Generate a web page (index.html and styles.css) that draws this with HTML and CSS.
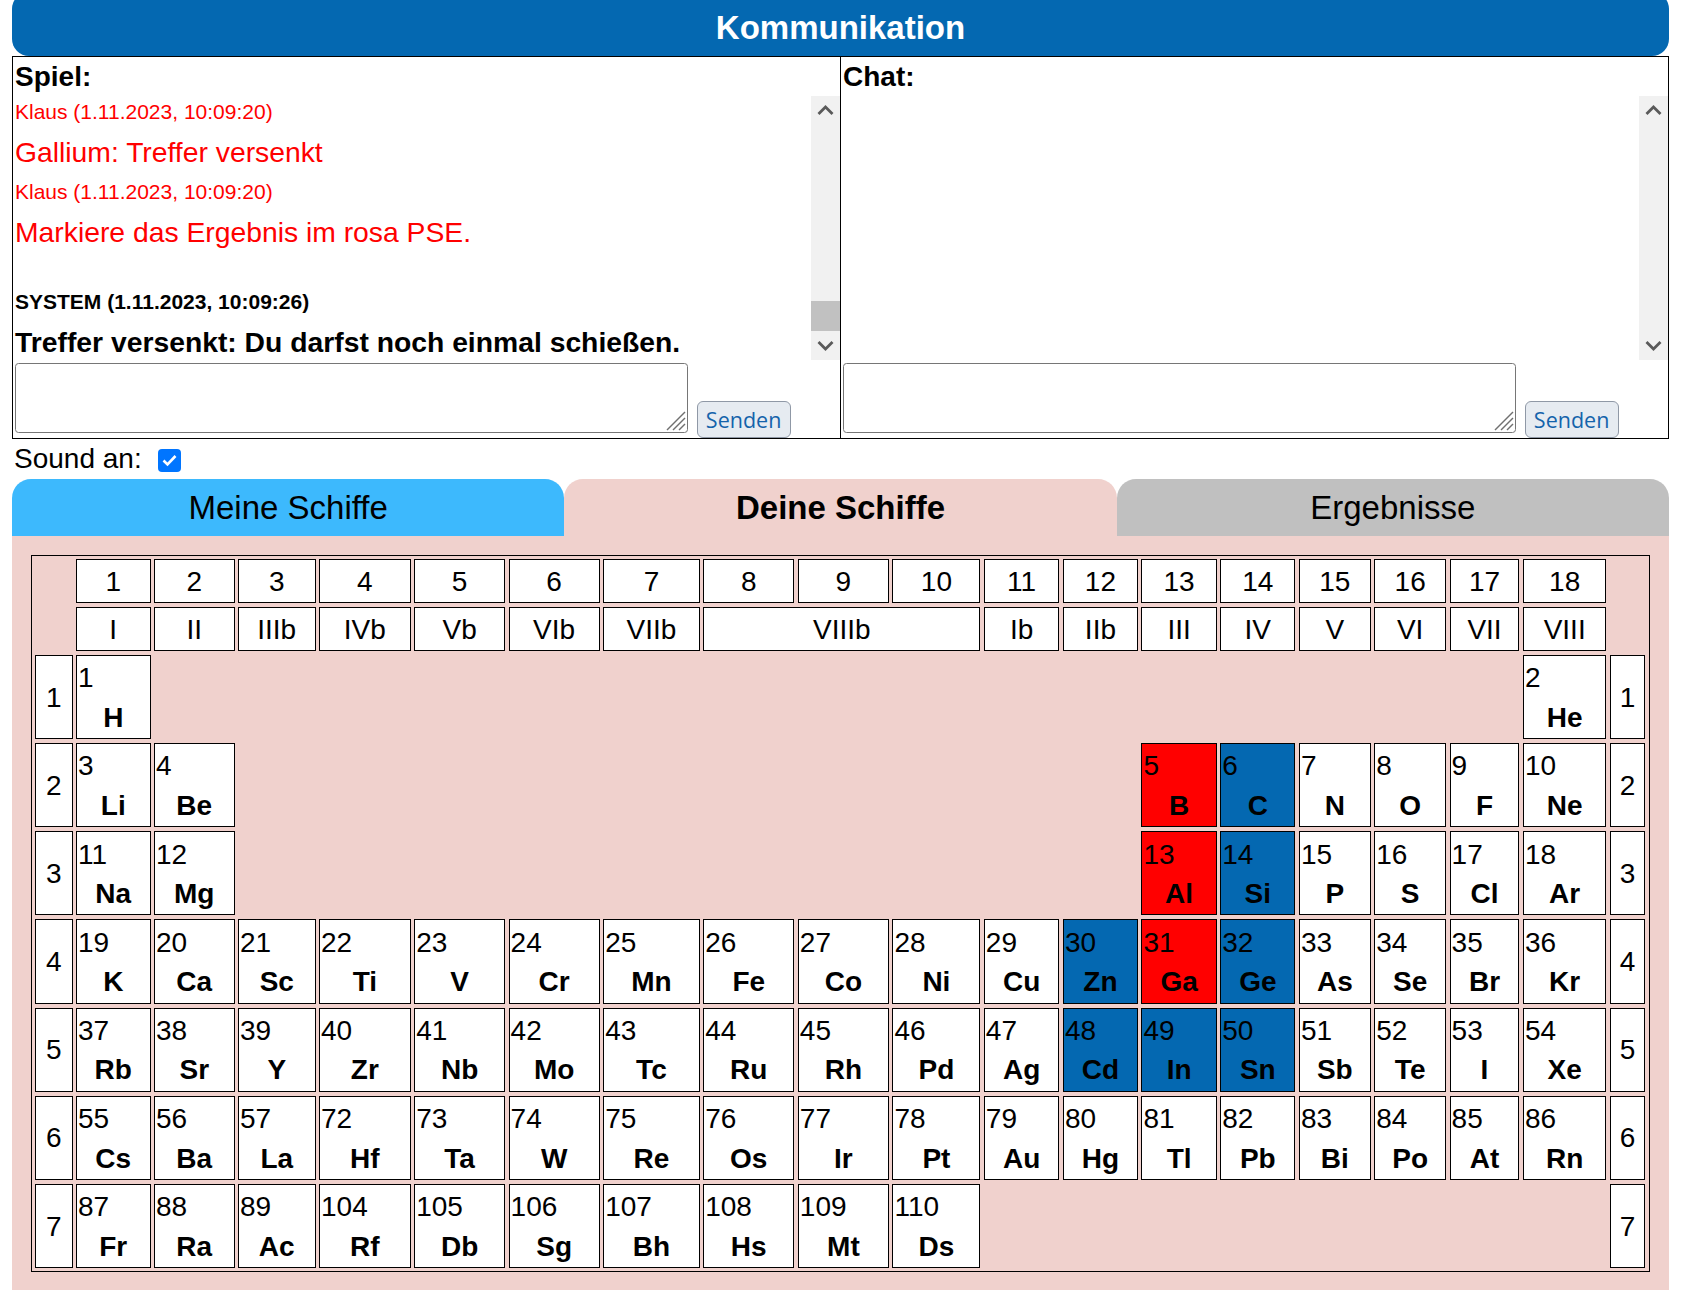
FILE: index.html
```html
<!DOCTYPE html>
<html lang="de">
<head>
<meta charset="utf-8">
<title>PSE – Schiffe versenken</title>
<link rel="stylesheet" href="styles.css">
</head>
<body>
<div class="page">
  <h1 class="comm-title">Kommunikation</h1>
  <div class="comm">
    <section class="panel">
      <h2 class="panel-title">Spiel:</h2>
      <div class="log">
        <div class="log-body">
          <div class="meta red">Klaus (1.11.2023, 10:09:20)</div>
          <div class="msg red">Gallium: Treffer versenkt</div>
          <div class="meta red">Klaus (1.11.2023, 10:09:20)</div>
          <div class="msg red extra">Markiere das Ergebnis im rosa PSE.</div>
          <div class="meta sys">SYSTEM (1.11.2023, 10:09:26)</div>
          <div class="msg sys last">Treffer versenkt: Du darfst noch einmal schießen.</div>
        </div>
        <div class="scrollbar">
          <div class="sb-btn"><svg width="29" height="29" viewBox="0 0 29 29"><polyline points="7.5,18 14.5,11 21.5,18" fill="none" stroke="#5a5a5a" stroke-width="2.8"/></svg></div>
          <div class="sb-track"><div class="sb-thumb"></div></div>
          <div class="sb-btn"><svg width="29" height="29" viewBox="0 0 29 29"><polyline points="7.5,11 14.5,18 21.5,11" fill="none" stroke="#5a5a5a" stroke-width="2.8"/></svg></div>
        </div>
      </div>
      <div class="compose">
        <div class="input-wrap">
          <textarea class="input" aria-label="Nachricht an das Spiel"></textarea>
          <svg class="grip" width="22" height="22" viewBox="0 0 22 22"><g stroke="#707070" stroke-width="1.5"><line x1="21" y1="3" x2="3" y2="21"/><line x1="21" y1="9" x2="9" y2="21"/><line x1="21" y1="15" x2="15" y2="21"/></g></svg>
        </div>
        <button class="send" type="button">Senden</button>
      </div>
    </section>
    <section class="panel">
      <h2 class="panel-title">Chat:</h2>
      <div class="log">
        <div class="log-body"></div>
        <div class="scrollbar">
          <div class="sb-btn"><svg width="29" height="29" viewBox="0 0 29 29"><polyline points="7.5,18 14.5,11 21.5,18" fill="none" stroke="#5a5a5a" stroke-width="2.8"/></svg></div>
          <div class="sb-track"></div>
          <div class="sb-btn"><svg width="29" height="29" viewBox="0 0 29 29"><polyline points="7.5,11 14.5,18 21.5,11" fill="none" stroke="#5a5a5a" stroke-width="2.8"/></svg></div>
        </div>
      </div>
      <div class="compose">
        <div class="input-wrap">
          <textarea class="input" aria-label="Chatnachricht"></textarea>
          <svg class="grip" width="22" height="22" viewBox="0 0 22 22"><g stroke="#707070" stroke-width="1.5"><line x1="21" y1="3" x2="3" y2="21"/><line x1="21" y1="9" x2="9" y2="21"/><line x1="21" y1="15" x2="15" y2="21"/></g></svg>
        </div>
        <button class="send" type="button">Senden</button>
      </div>
    </section>
  </div>

  <div class="sound">
    <span>Sound an:</span>
    <span class="check" role="checkbox" aria-checked="true"><svg width="23" height="23" viewBox="0 0 23 23"><polyline points="5.5,11.5 9.5,15.5 17.5,7" fill="none" stroke="#fff" stroke-width="2.6"/></svg></span>
  </div>

  <div class="tabs">
    <div class="tab tab-mine">Meine Schiffe</div>
    <div class="tab tab-yours">Deine Schiffe</div>
    <div class="tab tab-results">Ergebnisse</div>
  </div>

  <div class="board">
    <div class="pse">
      <div class="blank"></div>
      <div class="g">1</div><div class="g">2</div><div class="g">3</div><div class="g">4</div><div class="g">5</div><div class="g">6</div><div class="g">7</div><div class="g">8</div><div class="g">9</div><div class="g">10</div><div class="g">11</div><div class="g">12</div><div class="g">13</div><div class="g">14</div><div class="g">15</div><div class="g">16</div><div class="g">17</div><div class="g">18</div>
      <div class="blank"></div>

      <div class="blank"></div>
      <div class="g">I</div><div class="g">II</div><div class="g">IIIb</div><div class="g">IVb</div><div class="g">Vb</div><div class="g">VIb</div><div class="g">VIIb</div><div class="g span3">VIIIb</div><div class="g">Ib</div><div class="g">IIb</div><div class="g">III</div><div class="g">IV</div><div class="g">V</div><div class="g">VI</div><div class="g">VII</div><div class="g">VIII</div>
      <div class="blank"></div>

      <div class="per">1</div>
      <div class="el"><span class="z">1</span><span class="s">H</span></div>
      <div class="blank span16"></div>
      <div class="el"><span class="z">2</span><span class="s">He</span></div>
      <div class="per">1</div>

      <div class="per">2</div>
      <div class="el"><span class="z">3</span><span class="s">Li</span></div>
      <div class="el"><span class="z">4</span><span class="s">Be</span></div>
      <div class="blank span10"></div>
      <div class="el hit"><span class="z">5</span><span class="s">B</span></div>
      <div class="el ship"><span class="z">6</span><span class="s">C</span></div>
      <div class="el"><span class="z">7</span><span class="s">N</span></div>
      <div class="el"><span class="z">8</span><span class="s">O</span></div>
      <div class="el"><span class="z">9</span><span class="s">F</span></div>
      <div class="el"><span class="z">10</span><span class="s">Ne</span></div>
      <div class="per">2</div>

      <div class="per">3</div>
      <div class="el"><span class="z">11</span><span class="s">Na</span></div>
      <div class="el"><span class="z">12</span><span class="s">Mg</span></div>
      <div class="blank span10"></div>
      <div class="el hit"><span class="z">13</span><span class="s">Al</span></div>
      <div class="el ship"><span class="z">14</span><span class="s">Si</span></div>
      <div class="el"><span class="z">15</span><span class="s">P</span></div>
      <div class="el"><span class="z">16</span><span class="s">S</span></div>
      <div class="el"><span class="z">17</span><span class="s">Cl</span></div>
      <div class="el"><span class="z">18</span><span class="s">Ar</span></div>
      <div class="per">3</div>

      <div class="per">4</div>
      <div class="el"><span class="z">19</span><span class="s">K</span></div>
      <div class="el"><span class="z">20</span><span class="s">Ca</span></div>
      <div class="el"><span class="z">21</span><span class="s">Sc</span></div>
      <div class="el"><span class="z">22</span><span class="s">Ti</span></div>
      <div class="el"><span class="z">23</span><span class="s">V</span></div>
      <div class="el"><span class="z">24</span><span class="s">Cr</span></div>
      <div class="el"><span class="z">25</span><span class="s">Mn</span></div>
      <div class="el"><span class="z">26</span><span class="s">Fe</span></div>
      <div class="el"><span class="z">27</span><span class="s">Co</span></div>
      <div class="el"><span class="z">28</span><span class="s">Ni</span></div>
      <div class="el"><span class="z">29</span><span class="s">Cu</span></div>
      <div class="el ship"><span class="z">30</span><span class="s">Zn</span></div>
      <div class="el hit"><span class="z">31</span><span class="s">Ga</span></div>
      <div class="el ship"><span class="z">32</span><span class="s">Ge</span></div>
      <div class="el"><span class="z">33</span><span class="s">As</span></div>
      <div class="el"><span class="z">34</span><span class="s">Se</span></div>
      <div class="el"><span class="z">35</span><span class="s">Br</span></div>
      <div class="el"><span class="z">36</span><span class="s">Kr</span></div>
      <div class="per">4</div>

      <div class="per">5</div>
      <div class="el"><span class="z">37</span><span class="s">Rb</span></div>
      <div class="el"><span class="z">38</span><span class="s">Sr</span></div>
      <div class="el"><span class="z">39</span><span class="s">Y</span></div>
      <div class="el"><span class="z">40</span><span class="s">Zr</span></div>
      <div class="el"><span class="z">41</span><span class="s">Nb</span></div>
      <div class="el"><span class="z">42</span><span class="s">Mo</span></div>
      <div class="el"><span class="z">43</span><span class="s">Tc</span></div>
      <div class="el"><span class="z">44</span><span class="s">Ru</span></div>
      <div class="el"><span class="z">45</span><span class="s">Rh</span></div>
      <div class="el"><span class="z">46</span><span class="s">Pd</span></div>
      <div class="el"><span class="z">47</span><span class="s">Ag</span></div>
      <div class="el ship"><span class="z">48</span><span class="s">Cd</span></div>
      <div class="el ship"><span class="z">49</span><span class="s">In</span></div>
      <div class="el ship"><span class="z">50</span><span class="s">Sn</span></div>
      <div class="el"><span class="z">51</span><span class="s">Sb</span></div>
      <div class="el"><span class="z">52</span><span class="s">Te</span></div>
      <div class="el"><span class="z">53</span><span class="s">I</span></div>
      <div class="el"><span class="z">54</span><span class="s">Xe</span></div>
      <div class="per">5</div>

      <div class="per">6</div>
      <div class="el"><span class="z">55</span><span class="s">Cs</span></div>
      <div class="el"><span class="z">56</span><span class="s">Ba</span></div>
      <div class="el"><span class="z">57</span><span class="s">La</span></div>
      <div class="el"><span class="z">72</span><span class="s">Hf</span></div>
      <div class="el"><span class="z">73</span><span class="s">Ta</span></div>
      <div class="el"><span class="z">74</span><span class="s">W</span></div>
      <div class="el"><span class="z">75</span><span class="s">Re</span></div>
      <div class="el"><span class="z">76</span><span class="s">Os</span></div>
      <div class="el"><span class="z">77</span><span class="s">Ir</span></div>
      <div class="el"><span class="z">78</span><span class="s">Pt</span></div>
      <div class="el"><span class="z">79</span><span class="s">Au</span></div>
      <div class="el"><span class="z">80</span><span class="s">Hg</span></div>
      <div class="el"><span class="z">81</span><span class="s">Tl</span></div>
      <div class="el"><span class="z">82</span><span class="s">Pb</span></div>
      <div class="el"><span class="z">83</span><span class="s">Bi</span></div>
      <div class="el"><span class="z">84</span><span class="s">Po</span></div>
      <div class="el"><span class="z">85</span><span class="s">At</span></div>
      <div class="el"><span class="z">86</span><span class="s">Rn</span></div>
      <div class="per">6</div>

      <div class="per">7</div>
      <div class="el"><span class="z">87</span><span class="s">Fr</span></div>
      <div class="el"><span class="z">88</span><span class="s">Ra</span></div>
      <div class="el"><span class="z">89</span><span class="s">Ac</span></div>
      <div class="el"><span class="z">104</span><span class="s">Rf</span></div>
      <div class="el"><span class="z">105</span><span class="s">Db</span></div>
      <div class="el"><span class="z">106</span><span class="s">Sg</span></div>
      <div class="el"><span class="z">107</span><span class="s">Bh</span></div>
      <div class="el"><span class="z">108</span><span class="s">Hs</span></div>
      <div class="el"><span class="z">109</span><span class="s">Mt</span></div>
      <div class="el"><span class="z">110</span><span class="s">Ds</span></div>
      <div class="blank span8"></div>
      <div class="per">7</div>
    </div>
  </div>
</div>
</body>
</html>
```

FILE: styles.css
```css
* {
  box-sizing: border-box;
}

html,
body {
  margin: 0;
  padding: 0;
  background: #fff;
}

body {
  font-family: "Liberation Sans", Arial, Helvetica, sans-serif;
  font-size: 28px;
  line-height: 32px;
  color: #000;
}

.page {
  width: 1657px;
  margin: -8px 0 0 12px;
}

/* ---------- Kommunikation ---------- */

.comm-title {
  margin: 0;
  height: 64px;
  padding-top: 16.5px;
  background: #0468b1;
  color: #fff;
  font-size: 33px;
  line-height: 38px;
  font-weight: bold;
  text-align: center;
  border-radius: 17px;
}

.comm {
  display: flex;
  border: 1px solid #000;
}

.panel {
  flex: 1 1 0;
  min-width: 0;
  display: flex;
  flex-direction: column;
}

.panel + .panel {
  border-left: 1px solid #000;
}

.panel-title {
  margin: 0;
  height: 39px;
  padding: 3.8px 0 0 2px;
  font-size: 28px;
  line-height: 32px;
  font-weight: bold;
}

.log {
  display: flex;
  height: 264px;
}

.log-body {
  flex: 1 1 auto;
  min-width: 0;
  overflow: hidden;
  display: flex;
  flex-direction: column;
  justify-content: flex-end;
  padding: 0 0 1.7px 2px;
}

.meta {
  font-size: 21px;
  line-height: 24px;
  margin-bottom: 12px;
}

.msg {
  font-size: 28.3px;
  line-height: 32px;
  margin-bottom: 12.5px;
  white-space: nowrap;
}

.msg.extra {
  margin-bottom: 42px;
}

.msg.last {
  margin-bottom: 0;
}

.red {
  color: #f00;
}

.sys {
  color: #000;
  font-weight: bold;
}

.scrollbar {
  flex: none;
  width: 29px;
  background: #f1f1f1;
  display: flex;
  flex-direction: column;
}

.sb-btn {
  height: 29px;
  flex: none;
}

.sb-btn svg {
  display: block;
}

.sb-track {
  flex: 1 1 auto;
  display: flex;
  flex-direction: column;
  justify-content: flex-end;
}

.sb-thumb {
  height: 30px;
  background: #c1c1c1;
}

.compose {
  height: 78px;
  display: flex;
  align-items: flex-end;
}

.input-wrap {
  position: relative;
  flex: none;
  width: 673px;
  height: 70px;
  margin: 0 0 5px 1.6px;
}

.input {
  display: block;
  width: 100%;
  height: 100%;
  margin: 0;
  padding: 3px;
  resize: none;
  border: 1px solid #767676;
  border-radius: 3.5px;
  background: #fff;
  font: inherit;
}

.grip {
  position: absolute;
  right: 2px;
  bottom: 2px;
}

.send {
  flex: none;
  width: 94px;
  height: 37px;
  margin: 0 0 0 9px;
  padding: 0;
  border: 1px solid #8f98a6;
  border-radius: 6px;
  background: #e6ebf1;
  color: #1463ab;
  font-family: "Open Sans", "Noto Sans", sans-serif;
  font-size: 21.5px;
  line-height: 35px;
}

/* ---------- Sound ---------- */

.sound {
  height: 40px;
  display: flex;
  align-items: center;
  gap: 16px;
  padding-left: 2px;
}

.check {
  width: 23px;
  height: 23px;
  margin-top: 3px;
  border-radius: 4px;
  background: #0075ff;
}

.check svg {
  display: block;
}

/* ---------- Tabs ---------- */

.tabs {
  display: flex;
  height: 57px;
}

.tab {
  flex: 1 1 0;
  display: flex;
  align-items: center;
  justify-content: center;
  border-radius: 19px 19px 0 0;
  font-size: 33px;
  line-height: 38px;
}

.tab-mine {
  background: #3db9fd;
}

.tab-yours {
  background: #f0d1cd;
  font-weight: bold;
}

.tab-results {
  background: #c0c0c0;
}

/* ---------- Periodensystem ---------- */

.board {
  background: #f0d1cd;
  padding: 19px 18px 18px 19px;
}

.pse {
  display: grid;
  width: max-content;
  grid-template-columns:
    37.5px 74.5px 80.5px 77.5px 91.7px 90.9px 91.1px 96.5px 91.2px 91.1px
    87.9px 75.6px 75px 75.3px 75.2px 71.8px 71.9px 69.8px 83.5px 35.5px;
  grid-template-rows: 44px 44px repeat(7, 84.17px);
  column-gap: 3.5px;
  row-gap: 4px;
  border: 1px solid #000;
  padding: 3px 4px 3px 3px;
}

.span3 {
  grid-column: span 3;
}

.span8 {
  grid-column: span 8;
}

.span10 {
  grid-column: span 10;
}

.span16 {
  grid-column: span 16;
}

.g,
.per {
  border: 1px solid #000;
  background: #fff;
  display: flex;
  align-items: center;
  justify-content: center;
  padding-top: 1px;
}

.el {
  border: 1px solid #000;
  background: #fff;
  display: flex;
  flex-direction: column;
  justify-content: center;
  gap: 7.5px;
  padding: 2px 1px 0;
}

.el .z {
  line-height: 32px;
}

.el .s {
  line-height: 32px;
  font-weight: bold;
  text-align: center;
}

.el.hit {
  background: #ff0000;
}

.el.ship {
  background: #0468b1;
}
```
